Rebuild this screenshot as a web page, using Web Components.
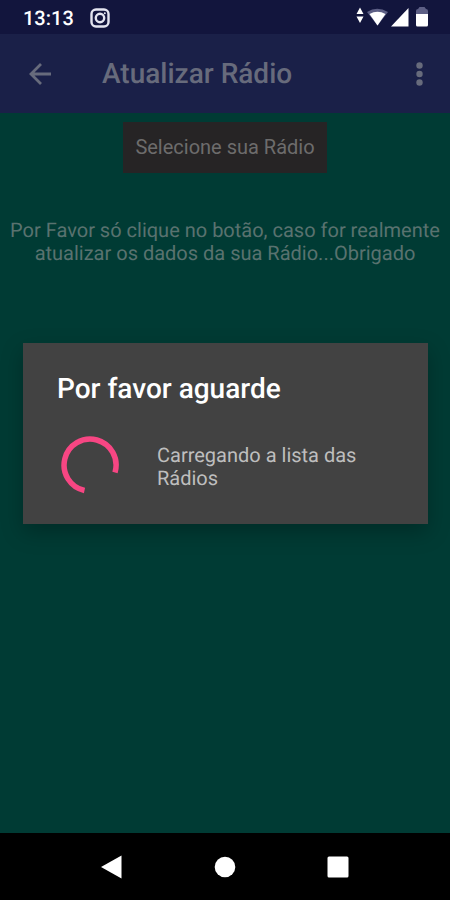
<!DOCTYPE html>
<html lang="pt-BR">
<head>
<meta charset="utf-8">
<meta name="viewport" content="width=device-width, initial-scale=1">
<title>Atualizar Rádio</title>
<style>
body {
  margin: 0;
  background: #000;
  font-family: Roboto, "Liberation Sans", sans-serif;
  text-rendering: geometricPrecision;
}
</style>
</head>
<body>
<radio-screen>
  <status-bar slot="status">13:13</status-bar>
  <app-bar slot="bar">Atualizar Rádio</app-bar>
  <radio-form>
    <span slot="action">Selecione sua Rádio</span>
    Por Favor só clique no botão, caso for realmente atualizar os dados da sua Rádio...Obrigado
  </radio-form>
  <progress-dialog slot="dialog">
    <span slot="title">Por favor aguarde</span>
    Carregando a lista das Rádios
  </progress-dialog>
  <nav-bar slot="nav"></nav-bar>
</radio-screen>

<script>
// Attaches an open shadow root with the given markup
function define(name, html) {
  const template = document.createElement("template");
  template.innerHTML = html;
  customElements.define(name, class extends HTMLElement {
    constructor() {
      super();
      this.attachShadow({ mode: "open" });
      this.shadowRoot.appendChild(template.content.cloneNode(true));
    }
  });
}

// Whole screen: system bars at both ends, dialog layer between them
define("radio-screen", `
<style>
:host {
  display: flex;
  flex-direction: column;
  min-height: 100vh;
}
.window {
  position: relative;
  flex: 1;
  display: flex;
  flex-direction: column;
}
main {
  flex: 1;
  background: #003b34;
}
.layer {
  position: absolute;
  inset: 0;
  display: flex;
  align-items: center;
  padding: 0 22px 0 23px;
}
</style>
<slot name="status"></slot>
<div class="window">
  <slot name="bar"></slot>
  <main><slot></slot></main>
  <div class="layer"><slot name="dialog"></slot></div>
</div>
<slot name="nav"></slot>
`);

define("status-bar", `
<style>
:host {
  display: flex;
  align-items: center;
  height: 34px;
  padding: 2px 20px 0 23px;
  box-sizing: border-box;
  background: #12153d;
  color: #fff;
  font-size: 20px;
  font-weight: 500;
}
svg {
  display: block;
}
.note {
  margin-left: 16px;
}
.system {
  margin-left: auto;
}
</style>
<slot></slot>
<svg class="note" width="20" height="20" viewBox="0 0 20 20" fill="none" stroke="#e4e5f0" stroke-width="2.4" aria-hidden="true">
  <rect x="1.5" y="1.5" width="17" height="17" rx="4.5"/>
  <circle cx="10" cy="10" r="4.2"/>
  <circle cx="14.8" cy="5.2" r="1" fill="#e4e5f0" stroke="none"/>
</svg>
<svg class="system" width="74" height="22" viewBox="0 0 74 22" fill="#fff" aria-hidden="true">
  <path d="M0.5 7 L4 0.5 L7.5 7Z M0.5 9.5 H7.5 L4 16Z"/>
  <path d="M11 5 Q21 -1.500 32 5 L21.500 18.500Z" fill="#5d5f85"/>
  <path d="M13.500 7 Q21.500 2.500 29.500 7 L21.500 18.500Z"/>
  <path d="M35 19.500 L52.500 1 V19.500Z"/>
  <path d="M60 8 V4 Q60 2 62 2 L63.500 0 H68.500 L70 2 Q72 2 72 4 V8Z" fill="#5d5f85"/>
  <path d="M60 7 H72 V18 Q72 19.500 70.500 19.500 H61.500 Q60 19.500 60 18Z"/>
</svg>
`);

define("app-bar", `
<style>
:host {
  display: block;
  background: #1a2048;
  color: #676b7c;
}
header {
  display: flex;
  align-items: center;
  height: 79px;
  padding: 0 16px;
}
button {
  display: flex;
  padding: 8px;
  border: 0;
  background: none;
  color: inherit;
}
h1 {
  flex: 1;
  margin: 0 0 0 38px;
  font-size: 28px;
  font-weight: 500;
  line-height: 32px;
}
</style>
<header>
  <button type="button" aria-label="Voltar">
    <svg width="32" height="32" viewBox="0 0 32 32" fill="none" stroke="currentColor" stroke-width="2.8">
      <path d="M27 16 H7 M17 6 L7 16 L17 26"/>
    </svg>
  </button>
  <h1><slot></slot></h1>
  <button type="button" aria-label="Mais opções">
    <svg width="12" height="32" viewBox="0 0 12 32" fill="currentColor">
      <circle cx="5.5" cy="7.5" r="3.2"/>
      <circle cx="5.5" cy="16" r="3.2"/>
      <circle cx="5.5" cy="24.5" r="3.2"/>
    </svg>
  </button>
</header>
`);

define("radio-form", `
<style>
:host {
  display: flex;
  flex-direction: column;
  align-items: center;
  gap: 46px;
  padding: 9px 8px;
  color: #59726f;
  font-size: 20px;
  line-height: 23px;
  text-align: center;
}
button {
  padding: 14px 12px;
  border: 0;
  background: #262425;
  color: #6d6c6c;
  font: inherit;
}
p {
  margin: 0;
}
</style>
<button type="button"><slot name="action"></slot></button>
<p><slot></slot></p>
`);

define("progress-dialog", `
<style>
:host {
  display: block;
  flex: 1;
  background: #424242;
  box-shadow: 0 8px 20px rgba(0, 0, 0, 0.25);
}
section {
  padding: 30px 34px 28px;
}
h2 {
  margin: 0;
  color: #fff;
  font-size: 28px;
  font-weight: 500;
  line-height: 32px;
}
.row {
  display: flex;
  align-items: center;
  gap: 34px;
  margin-top: 29px;
}
.spinner {
  flex: none;
  display: block;
  margin: 2px 4px;
}
p {
  margin: 0;
  padding-top: 4px;
  color: #bebebe;
  font-size: 20px;
  line-height: 23px;
}
</style>
<section role="dialog" aria-labelledby="title">
  <h2 id="title"><slot name="title"></slot></h2>
  <div class="row">
    <svg class="spinner" width="58" height="58" viewBox="0 0 58 58" fill="none" stroke="#f74683" stroke-width="5.5" role="progressbar" aria-label="Carregando">
      <path d="M23.5 54.5 A26 26 0 1 1 54 36.5"/>
    </svg>
    <p><slot></slot></p>
  </div>
</section>
`);

define("nav-bar", `
<style>
:host {
  display: block;
  background: #000;
}
nav {
  display: flex;
  justify-content: center;
  align-items: center;
  gap: 73px;
  height: 67px;
}
button {
  display: flex;
  padding: 8px;
  border: 0;
  background: none;
  color: #fff;
}
</style>
<nav>
  <button type="button" aria-label="Voltar">
    <svg width="24" height="24" viewBox="0 0 24 24" fill="currentColor"><path d="M1 12 L21.5 0.5 V23.5Z"/></svg>
  </button>
  <button type="button" aria-label="Início">
    <svg width="24" height="24" viewBox="0 0 24 24" fill="currentColor"><circle cx="12" cy="12" r="10.3"/></svg>
  </button>
  <button type="button" aria-label="Recentes">
    <svg width="24" height="24" viewBox="0 0 24 24" fill="currentColor"><rect x="1.5" y="1.5" width="21" height="21" rx="1.5"/></svg>
  </button>
</nav>
`);
</script>
</body>
</html>
